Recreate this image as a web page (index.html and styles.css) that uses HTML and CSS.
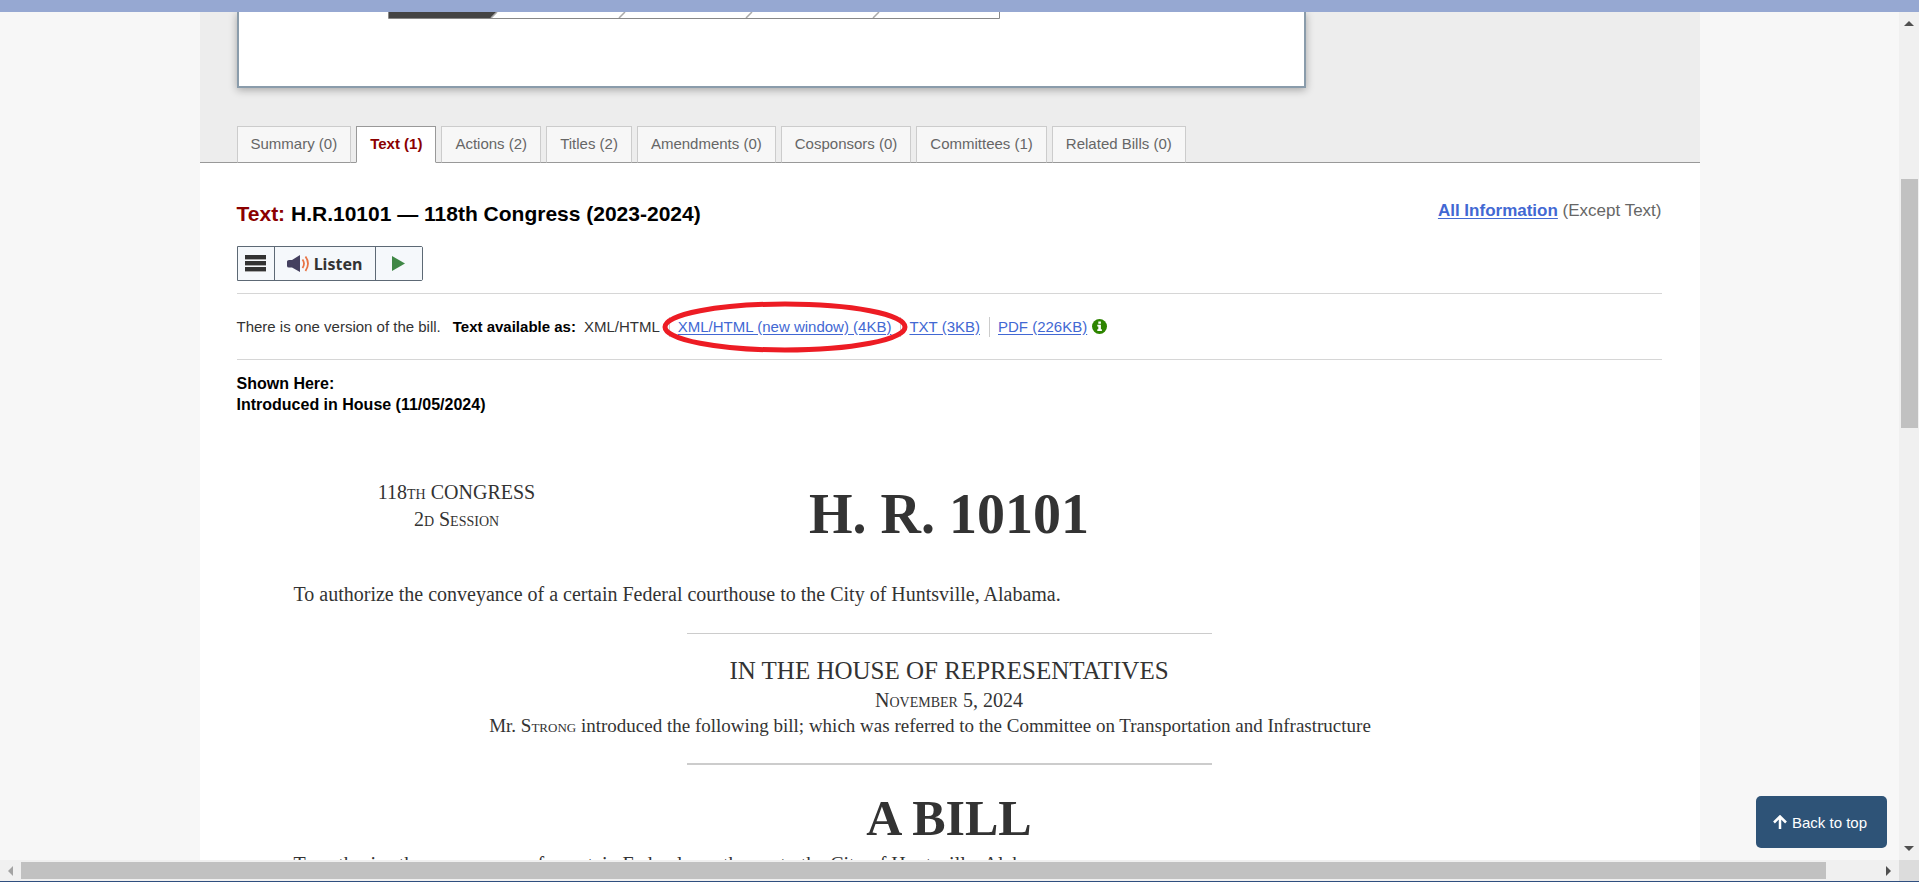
FILE: index.html
```html
<!DOCTYPE html>
<html lang="en">
<head>
<meta charset="utf-8">
<title>Text - H.R.10101 - 118th Congress (2023-2024)</title>
<link rel="stylesheet" href="styles.css">
</head>
<body>
<div class="window">
  <div class="topbar"></div>
  <div class="frame">
    <div class="viewport">
      <main class="page">
        <header class="overview">
          <section class="panel">
            <svg class="tracker" width="614" height="7" viewBox="0 0 614 7" aria-hidden="true">
              <path d="M0 0H109L103 6H0Z" fill="#444"/>
              <path d="M109 0L103 6M237 0L231 6M364 0L358 6M491 0L485 6" stroke="#aaa" stroke-width="1.5" fill="none"/>
              <path d="M.5 0V6.5H611.5V0" stroke="#888" fill="none"/>
            </svg>
          </section>
          <nav class="tabs">
            <a class="tab" href="#">Summary (0)</a>
            <a class="tab active" href="#">Text (1)</a>
            <a class="tab" href="#">Actions (2)</a>
            <a class="tab" href="#">Titles (2)</a>
            <a class="tab" href="#">Amendments (0)</a>
            <a class="tab" href="#">Cosponsors (0)</a>
            <a class="tab" href="#">Committees (1)</a>
            <a class="tab" href="#">Related Bills (0)</a>
          </nav>
        </header>
        <div class="content">
          <div class="heading">
            <h1><span class="accent">Text:</span> H.R.10101 — 118th Congress (2023-2024)</h1>
            <p class="all-info"><a href="#">All Information</a> (Except Text)</p>
          </div>
          <div class="listen">
            <button type="button" class="menu" aria-label="Menu">
              <svg width="21" height="17" viewBox="0 0 21 17"><path d="M0 0h21v4H0zM0 6h21v4H0zM0 12h21v4H0z" fill="#333"/><path d="M0 4.5h21M0 10.5h21M0 16.5h21" stroke="#aaa"/></svg>
            </button>
            <button type="button" class="speak">
              <svg width="23" height="18" viewBox="0 0 23 18"><path d="M0 6.500Q0 5 2 5H5L13 0V17L5 12.500H2Q0 12.500 0 11Z" fill="#44405f"/><path d="M15.500 4.500Q18.500 8.500 15.500 13M18.500 1.500Q23.500 8.500 18.500 16" stroke="#e87445" stroke-width="1.800" fill="none"/></svg>
              Listen
            </button>
            <button type="button" class="play" aria-label="Play">
              <svg width="13" height="15" viewBox="0 0 13 15"><path d="M0 0L13 7.500L0 15Z" fill="#3f8745"/></svg>
            </button>
          </div>
          <div class="versions">
            <span class="count">There is one version of the bill.</span>
            <strong>Text available as:</strong>
            <ul class="formats">
              <li>XML/HTML</li>
              <li class="marked"><a href="#">XML/HTML (new window) (4KB)</a>
                <svg class="ring" width="246" height="52" viewBox="0 0 246 52" aria-hidden="true"><ellipse cx="123" cy="26" rx="120" ry="23" fill="none" stroke="#ed1c24" stroke-width="5"/></svg>
              </li>
              <li><a href="#">TXT (3KB)</a></li>
              <li><a href="#">PDF (226KB)</a></li>
            </ul>
            <svg class="info" width="15" height="15" viewBox="0 0 15 15" role="img" aria-label="Information"><circle cx="7.500" cy="7.500" r="7.500" fill="#2e8500"/><path d="M6.300 2.500h2.600v2.200H6.300zM5.300 5.700h3.600v4.600h1v1.700H5.300v-1.700h1V7.400h-1z" fill="#fff"/></svg>
          </div>
          <p class="shown">Shown Here:<br>Introduced in House (11/05/2024)</p>
          <article class="bill">
            <div class="bill-head">
              <p class="session">118<span class="caps">th</span> CONGRESS<br>2<span class="caps">d Session</span></p>
              <h2 class="number">H. R. 10101</h2>
            </div>
            <p class="purpose">To authorize the conveyance of a certain Federal courthouse to the City of Huntsville, Alabama.</p>
            <hr class="rule">
            <p class="chamber">IN THE HOUSE OF REPRESENTATIVES</p>
            <p class="date"><span class="caps">November</span> 5, 2024</p>
            <p class="action">Mr. <span class="caps">Strong</span> introduced the following bill; which was referred to the Committee on Transportation and Infrastructure</p>
            <hr class="rule thick">
            <h2 class="a-bill">A BILL</h2>
            <p class="long-title">To authorize the conveyance of a certain Federal courthouse to the City of Huntsville, Alabama.</p>
          </article>
        </div>
      </main>
      <a class="back" href="#"><svg width="14" height="14" viewBox="0 0 14 14" aria-hidden="true"><path d="M7 14V2M1 7.500L7 1.500L13 7.500" stroke="#fff" stroke-width="2.500" fill="none"/></svg>Back to top</a>
    </div>
    <div class="scroll-y">
      <svg width="10" height="5" viewBox="0 0 10 5"><path d="M0 5L5 0L10 5Z" fill="#505050"/></svg>
      <div class="track-y"><div class="thumb-y"></div></div>
      <svg width="10" height="5" viewBox="0 0 10 5"><path d="M0 0L5 5L10 0Z" fill="#505050"/></svg>
    </div>
  </div>
  <div class="scroll-x">
    <div class="bar-x">
      <svg width="5" height="10" viewBox="0 0 5 10"><path d="M5 0L0 5L5 10Z" fill="#a3a3a3"/></svg>
      <div class="track-x"><div class="thumb-x"></div></div>
      <svg width="5" height="10" viewBox="0 0 5 10"><path d="M0 0L5 5L0 10Z" fill="#505050"/></svg>
    </div>
    <div class="corner"></div>
  </div>
</div>
</body>
</html>
```
FILE: styles.css
```css
* { box-sizing: border-box; }
body {
  margin: 0;
  font-family: "Liberation Sans", Arial, sans-serif;
  font-size: 16px;
  color: #333;
}
h1, h2, p, ul { margin: 0; padding: 0; }
a { color: #4268d3; text-underline-offset: 2px; }
svg { display: block; flex: none; }

.window { display: flex; flex-direction: column; height: 100vh; border-bottom: 1px solid #2f4f7f; }
.topbar { flex: none; height: 12px; background: #96a8d2; }
.frame { flex: 1; min-height: 0; display: flex; }
.viewport { position: relative; flex: 1; min-width: 0; overflow: hidden; background: #f7f7f7; }
.page { max-width: 1500px; min-height: 100%; margin: 0 auto; background: #fff; }

.overview { padding: 0 37px; background: #ededed; border-bottom: 1px solid #999; }
.panel {
  max-width: 1069px;
  height: 76px;
  padding-left: 149px;
  background: #fff;
  border: 2px solid #8a9cab;
  border-top: 0;
  box-shadow: 0 2px 8px rgba(0, 0, 0, 0.3);
}
.tabs { display: flex; gap: 5px; margin: 38px 0 -1px; }
.tab {
  height: 37px;
  padding: 0 13px;
  border: 1px solid #ccc;
  border-bottom-color: #999;
  background: #f7f7f7;
  color: #666;
  font-size: 15px;
  line-height: 34px;
  text-decoration: none;
  white-space: nowrap;
}
.tab.active { background: #fff; border-color: #999; border-bottom-color: #fff; color: #8b0000; font-weight: bold; }

.content { padding: 36px 38px 0 37px; }
.heading { display: flex; justify-content: space-between; }
h1 { color: #000; font-size: 21px; line-height: 30px; }
.accent { color: #8b0000; }
.all-info { color: #666; font-size: 17px; line-height: 24px; }
.all-info a { font-weight: bold; }

.listen { display: flex; width: max-content; height: 35px; margin-top: 17px; border: 1px solid #5d6975; border-radius: 0 2px 2px 0; }
.listen button {
  display: flex;
  align-items: center;
  justify-content: center;
  gap: 4px;
  padding: 0;
  border: 0;
  border-right: 1px solid #5d6975;
  background: #f5f8fb;
  color: #333;
  font: 700 16px/24px "Noto Sans", "Open Sans", sans-serif;
}
.listen .menu { width: 37px; }
.listen .speak { width: 101px; }
.listen .play { width: 46px; border-right: 0; }

.versions {
  display: flex;
  align-items: center;
  height: 67px;
  margin-top: 12px;
  border: 1px solid #d6d6d6;
  border-width: 1px 0;
  font-size: 15px;
  line-height: 20px;
  white-space: nowrap;
}
.versions strong { margin: 0 8px 0 12px; color: #000; }
.formats { display: flex; list-style: none; }
.formats li { padding-right: 9px; margin-right: 8px; border-right: 1px solid #ccc; }
.formats li:last-child { padding: 0; margin: 0 5px 0 0; border: 0; }
.marked { position: relative; }
.ring { position: absolute; left: -16px; top: -16px; }

.shown { margin-top: 13px; color: #000; font-size: 16px; font-weight: bold; line-height: 21px; }

.bill { padding-top: 64px; font-family: "Liberation Serif", "Times New Roman", serif; text-align: center; }
.caps { font-variant: small-caps; }
.bill-head { display: grid; grid-template-columns: 440px 1fr 440px; }
.session { font-size: 20px; line-height: 27px; }
.number { font-size: 56px; line-height: 70px; }
.purpose, .long-title { padding: 0 57px; font-size: 20px; line-height: 28px; text-align: left; }
.purpose { margin-top: 31px; }
.rule { width: 525px; height: 1px; margin: 25px auto 22px; border: 0; background: #ccc; }
.chamber { font-size: 25px; line-height: 30px; }
.date { font-size: 20px; line-height: 28px; }
.action { padding-right: 38px; font-size: 19px; line-height: 24px; }
.thick { height: 2px; }
.a-bill { font-size: 50px; line-height: 63px; }

.back {
  position: absolute;
  right: 12px;
  bottom: 12px;
  display: flex;
  align-items: center;
  gap: 5px;
  height: 52px;
  padding: 0 20px 0 17px;
  border-radius: 5px;
  background: #2e5377;
  color: #fff;
  font-size: 15px;
  text-decoration: none;
}

.scroll-y { flex: none; width: 20px; display: flex; flex-direction: column; align-items: center; padding: 9px 0; background: #f0f0f0; }
.track-y { flex: 1; width: 17px; padding-top: 153px; }
.thumb-y { height: 249px; background: #c1c1c1; }
.scroll-x { flex: none; display: flex; height: 21px; }
.bar-x { flex: 1; display: flex; align-items: center; padding: 0 8px; background: #f0f0f0; }
.track-x { flex: 1; margin: 0 8px; }
.thumb-x { height: 17px; margin-right: 52px; background: #c1c1c1; }
.corner { width: 20px; background: #dcdcdc; }
```
